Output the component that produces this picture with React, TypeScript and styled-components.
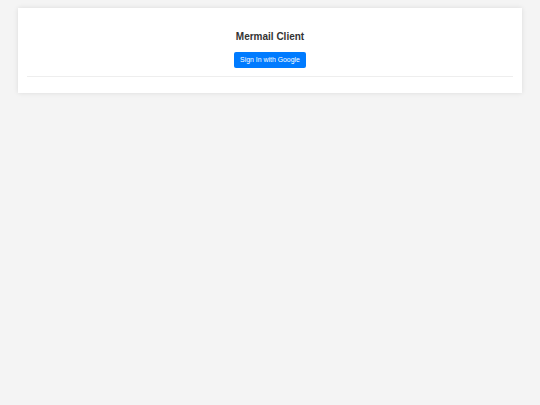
import React from "react";
import styled, { createGlobalStyle } from "styled-components";

const GlobalStyle = createGlobalStyle`
  html, body {
    margin: 0;
    padding: 0;
    background: #f4f4f4;
    font-family: "Liberation Sans", Arial, sans-serif;
  }
  body {
    min-height: 405px;
  }
`;

const Page = styled.div`
  padding: 8px 18px;
`;

const Card = styled.div`
  background: #ffffff;
  box-shadow: 0 0 5px rgba(0, 0, 0, 0.1);
  padding: 23px 9px 16px;
  display: flex;
  flex-direction: column;
  align-items: center;
`;

const Title = styled.h1`
  margin: 0 0 9px;
  font-size: 10px;
  font-weight: bold;
  color: #333333;
  line-height: 11.5px;
`;

const GoogleButton = styled.button`
  font-family: "Liberation Sans", Arial, sans-serif;
  font-size: 6.9px;
  line-height: 8px;
  color: #ffffff;
  background: #007bff;
  border: none;
  border-radius: 2px;
  padding: 4px 6px;
  cursor: pointer;
`;

const Divider = styled.div`
  align-self: stretch;
  height: 1px;
  background: #eeeeee;
  margin-top: 8px;
`;

export default function App() {
  return (
    <>
      <GlobalStyle />
      <Page>
        <Card>
          <Title>Mermail Client</Title>
          <GoogleButton>Sign In with Google</GoogleButton>
          <Divider />
        </Card>
      </Page>
    </>
  );
}
